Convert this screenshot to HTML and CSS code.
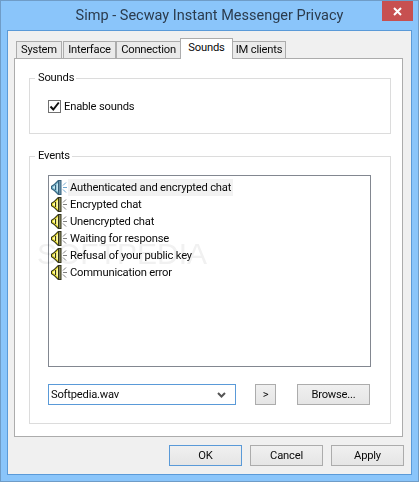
FILE: index.html
```html
<!DOCTYPE html>
<html lang="en">
<head>
<meta charset="utf-8">
<title>Simp - Secway Instant Messenger Privacy</title>
<link rel="stylesheet" href="styles.css">
</head>
<body>
<svg class="defs" width="0" height="0" aria-hidden="true">
  <symbol id="spk" viewBox="0 0 17 17">
    <path class="spk-dark" d="M0 7l3-2L7 1h3.500v15H7L3 12 0 10z"/>
    <path class="spk-fill" d="M1 7.500l2.500-1.500L7 2.500v12L3.500 11 1 9.500z"/>
    <path class="spk-hi" d="M2 8l2-1.500V10L2 9z"/>
    <path class="spk-hi" d="M5.500 5.500l1.500-1.500v9L5.500 11.500z"/>
    <path class="spk-line" d="M4 6h1v5H4z"/>
    <path class="spk-shade" d="M8 2h1.500v13H8z"/>
    <path class="spk-waves" d="M12 6.500l3-3M12 8.500h4M12 10.500l3 3"/>
  </symbol>
</svg>
<div class="window">
  <header class="titlebar">
    <h1 class="title">Simp - Secway Instant Messenger Privacy</h1>
    <button class="close" aria-label="Close"><svg width="9" height="9" viewBox="0 0 9 9"><path d="M1 1l7 7M8 1L1 8"/></svg></button>
  </header>
  <div class="client">
    <div class="tabs">
      <div class="tab t1">System</div>
      <div class="tab t2">Interface</div>
      <div class="tab t3">Connection</div>
      <div class="tab active">Sounds</div>
      <div class="tab t5">IM clients</div>
    </div>
    <div class="page">
      <fieldset class="group g-sounds">
        <legend>Sounds</legend>
        <label class="check"><span class="box"><svg width="11" height="11" viewBox="0 0 11 11"><path d="M1.500 5.500l2.800 3L9.800 1.500"/></svg></span>Enable sounds</label>
      </fieldset>
      <fieldset class="group g-events">
        <legend>Events</legend>
        <ul class="list">
          <li class="item selected"><svg class="ico" width="17" height="17"><use href="#spk"/></svg><span>Authenticated and encrypted chat</span></li>
          <li class="item"><svg class="ico" width="17" height="17"><use href="#spk"/></svg><span>Encrypted chat</span></li>
          <li class="item"><svg class="ico" width="17" height="17"><use href="#spk"/></svg><span>Unencrypted chat</span></li>
          <li class="item"><svg class="ico" width="17" height="17"><use href="#spk"/></svg><span>Waiting for response</span></li>
          <li class="item"><svg class="ico" width="17" height="17"><use href="#spk"/></svg><span>Refusal of your public key</span></li>
          <li class="item"><svg class="ico" width="17" height="17"><use href="#spk"/></svg><span>Communication error</span></li>
        </ul>
        <div class="controls">
          <div class="combo"><span>Softpedia.wav</span><svg width="9" height="6" viewBox="0 0 9 6"><path d="M1 1l3.500 3.500L8 1"/></svg></div>
          <button class="btn small">&gt;</button>
          <button class="btn browse">Browse...</button>
        </div>
      </fieldset>
    </div>
    <div class="actions">
      <button class="btn default">OK</button>
      <button class="btn">Cancel</button>
      <button class="btn">Apply</button>
    </div>
  </div>
</div>
<div class="watermark">SOFTPEDIA</div>
</body>
</html>
```
FILE: styles.css
```css
* { box-sizing: border-box; }
html, body { margin: 0; padding: 0; }
body {
  width: 419px;
  height: 482px;
  overflow: hidden;
  font: 11.2px Roboto, "Noto Sans", sans-serif;
  letter-spacing: -0.2px;
  color: #0a0a0a;
  position: relative;
}
.defs { position: absolute; }
.window {
  width: 419px;
  height: 482px;
  background: #8ac5fa;
  border: 1px solid #6f9cc7;
  padding: 0 6px 6px;
  display: flex;
  flex-direction: column;
}
.titlebar {
  height: 29px;
  flex: none;
  display: flex;
  justify-content: center;
  position: relative;
}
.title {
  margin: 4px 0 0;
  font-size: 14.500px;
  letter-spacing: 0;
  line-height: 22px;
  font-weight: 400;
  color: #2b3b4d;
}
.close {
  position: absolute;
  right: -1px;
  top: 0;
  width: 31px;
  height: 20px;
  border: 0;
  padding: 0;
  background: #c75050;
  display: flex;
  align-items: center;
  justify-content: center;
}
.close path { stroke: #fff; stroke-width: 2; fill: none; }
.client {
  flex: 1;
  background: #f0f0f0;
  border: 1px solid #5a9ad8;
  padding: 7px 8px 0 6px;
  display: flex;
  flex-direction: column;
}
.tabs {
  display: flex;
  height: 20px;
  padding-left: 2px;
  align-items: flex-end;
  flex: none;
}
.tab {
  height: 17px;
  border: 1px solid #acacac;
  border-bottom: 0;
  background: #eaeaea;
  text-align: center;
  line-height: 16px;
  white-space: nowrap;
}
.t1 { width: 46px; margin-right: 1px; }
.t2 { width: 53px; }
.t3 { width: 65px; }
.t5 { width: 54px; margin-left: -1px; }
.tab.active {
  width: 53px;
  height: 21px;
  margin: 0 0 -1px -1px;
  background: #fff;
  position: relative;
  z-index: 1;
  line-height: 18px;
  padding-bottom: 2px;
}
.page {
  width: 389px;
  height: 379px;
  flex: none;
  background: #fff;
  border: 1px solid #acacac;
  padding: 11px 12px 0 14px;
}
.group {
  margin: 0;
  padding: 0;
  border: 1px solid #dcdcdc;
  width: 362px;
  min-width: 0;
}
.group legend {
  margin-left: -13px;
  padding: 0 2px 0 3px;
  line-height: 16px;
}
.g-sounds { height: 64px; padding: 12px 0 0 18px; }
.g-events { height: 276px; margin-top: 14px; padding: 11px 19px 0 18px; }
.check { display: flex; align-items: center; height: 16px; }
.box {
  width: 13px;
  height: 13px;
  margin-right: 3px;
  border: 1px solid #707070;
  background: #fff;
  display: flex;
  align-items: center;
  justify-content: center;
}
.box path { stroke: #111; stroke-width: 2; fill: none; }
.list {
  list-style: none;
  margin: 0;
  padding: 3px 0 3px 2px;
  width: 323px;
  height: 192px;
  border: 1px solid #828790;
  background: #fff;
}
.item {
  --dark: #33331a;
  --fill: #e6dc28;
  --hi: #fdf9b0;
  --shade: #8a8a60;
  --wave: #808080;
  display: flex;
  align-items: center;
  height: 17px;
}
.selected {
  --dark: #34607c;
  --fill: #6fb0c8;
  --hi: #c8e6f0;
  --shade: #6f95ac;
  --wave: #6fa8d0;
}
.ico { flex: none; }
.item span { line-height: 17px; padding: 0 2px; flex: none; }
.selected span { background: #f2f2f2; }
.spk-dark { fill: var(--dark); }
.spk-fill { fill: var(--fill); }
.spk-hi { fill: var(--hi); }
.spk-line { fill: var(--dark); }
.spk-shade { fill: var(--shade); }
.spk-waves { stroke: var(--wave); stroke-width: 1; fill: none; }
.controls { display: flex; margin-top: 17px; }
.combo {
  width: 188px;
  height: 21px;
  border: 1px solid #5a9ad8;
  background: #fff;
  padding: 0 9px 0 2px;
  display: flex;
  align-items: center;
  justify-content: space-between;
}
.combo path { stroke: #555; stroke-width: 2; fill: none; }
.btn {
  width: 73px;
  height: 21px;
  padding: 0 0 1px;
  border: 1px solid #acacac;
  background: linear-gradient(#f0f0f0, #e5e5e5);
  font: inherit;
  letter-spacing: inherit;
  color: #0a0a0a;
}
.small { width: 21px; margin-left: 19px; }
.browse { margin-left: 21px; }
.default { border-color: #5a9ad8; }
.actions {
  display: flex;
  justify-content: flex-end;
  gap: 8px;
  margin: 8px -1px 0 0;
}
.watermark {
  position: absolute;
  left: 37px;
  top: 237px;
  font-size: 30px;
  letter-spacing: 0;
  color: #f1f1f1;
  font-family: "Liberation Sans", sans-serif;
  pointer-events: none;
  mix-blend-mode: multiply;
}
```
